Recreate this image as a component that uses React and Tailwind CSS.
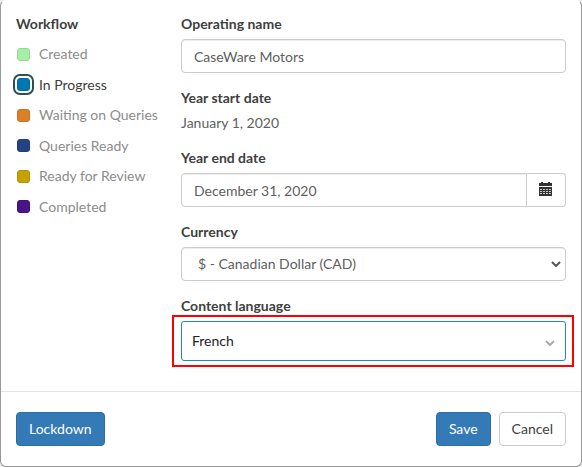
import React, { useState } from "react";

const STATES = [
  { name: "Created", swatch: "bg-[#a6f0a6] border-[#95d895]" },
  { name: "In Progress", swatch: "bg-[#0077b0] border-[#006b9e]" },
  { name: "Waiting on Queries", swatch: "bg-[#db8026] border-[#c57322]" },
  { name: "Queries Ready", swatch: "bg-[#244385] border-[#203c78]" },
  { name: "Ready for Review", swatch: "bg-[#c6a200] border-[#b29200]" },
  { name: "Completed", swatch: "bg-[#4a1486] border-[#431279]" },
];

const LABEL = "block text-[14px] leading-[20px] font-bold text-[#404040]";
const FIELD =
  "h-[34px] border border-[#ccc] bg-white px-3 text-[14px] leading-[20px] text-[#606060] outline-none shadow-[inset_0_1px_1px_rgba(0,0,0,0.075)]";
const BUTTON = "h-[34px] rounded border px-3 text-[14px] leading-[20px]";

function Workflow() {
  const [current, setCurrent] = useState("In Progress");
  return (
    <fieldset className="w-[149px] shrink-0">
      <legend className={LABEL}>Workflow</legend>
      <div className="mt-[10px] flex h-[173px] flex-col justify-between">
        {STATES.map((s) => (
          <label
            key={s.name}
            className={
              "flex items-center gap-[9px] pl-px text-[14px] leading-[20px] " +
              (s.name === current ? "text-[#404040]" : "text-[#8c8c8c]")
            }
          >
            <input
              type="radio"
              name="workflow"
              checked={s.name === current}
              onChange={() => setCurrent(s.name)}
              className={
                "size-[13px] shrink-0 appearance-none rounded-[3px] border outline-none checked:shadow-[0_0_0_2px_#fff,0_0_0_4px_#2f4f4f] " +
                s.swatch
              }
            />
            {s.name}
          </label>
        ))}
      </div>
    </fieldset>
  );
}

function CalendarIcon() {
  return (
    <svg viewBox="0 0 14 14" className="size-[14px]" shapeRendering="crispEdges" aria-hidden="true">
      <path fill="#333" d="M0 1h2V0h2v1h5V0h2v1h2v3H0zM0 5h13v9H0z" />
      <path
        stroke="#c8c8c8"
        strokeDasharray="2 1"
        d="M1 7.5h11M1 9.5h11M1 11.5h11"
      />
    </svg>
  );
}

function Chevron({ className }) {
  return (
    <svg viewBox="0 0 10 6" fill="none" stroke="currentColor" strokeWidth="2" className={className} aria-hidden="true">
      <path d="M1 1l4 4 4-4" />
    </svg>
  );
}

export default function App() {
  return (
    <div className="bg-[#ececec] font-[Lato,sans-serif]">
      <form
        className="rounded-md border border-[#999] border-t-[#fff] bg-white"
        onSubmit={(e) => e.preventDefault()}
      >
        <div className="flex px-[15px] pt-[13px] pb-[30px]">
          <Workflow />
          <div className="flex min-w-0 flex-1 flex-col gap-[15px] pl-4">
            <div>
              <label htmlFor="name" className={LABEL}>Operating name</label>
              <input id="name" defaultValue="CaseWare Motors" className={FIELD + " mt-[5px] block w-full rounded"} />
            </div>
            <div>
              <div className={LABEL}>Year start date</div>
              <div className="mt-[5px] text-[14px] leading-[20px] text-[#606060]">January 1, 2020</div>
            </div>
            <div>
              <label htmlFor="end" className={LABEL}>Year end date</label>
              <div className="mt-[5px] flex">
                <input id="end" defaultValue="December 31, 2020" className={FIELD + " min-w-0 flex-1 rounded-l"} />
                <button
                  type="button"
                  aria-label="Pick a date"
                  className="flex h-[34px] w-[39px] items-start justify-center rounded-r border border-l-0 border-[#ccc] bg-white pt-2"
                >
                  <CalendarIcon />
                </button>
              </div>
            </div>
            <div>
              <label htmlFor="currency" className={LABEL}>Currency</label>
              <div className="relative mt-[5px]">
                <select id="currency" className={FIELD + " block w-full appearance-none rounded pl-4"}>
                  <option>$ - Canadian Dollar (CAD)</option>
                </select>
                <Chevron className="pointer-events-none absolute top-[14px] right-[5px] h-[6px] w-[10px] text-[#555]" />
              </div>
            </div>
            <div>
              <label htmlFor="language" className={LABEL}>Content language</label>
              <div className="relative mt-[5px]">
                <select
                  id="language"
                  className="block h-[40px] w-full appearance-none rounded-[3px] border border-[#1c87c9] bg-white px-[10px] text-[14px] leading-[20px] text-[#222] outline-none"
                >
                  <option>French</option>
                </select>
                <Chevron className="pointer-events-none absolute top-[19px] right-[11px] h-[6px] w-[10px] text-[#aaa]" />
                <div className="pointer-events-none absolute -top-[6px] -right-[8px] -bottom-[6px] -left-[9px] border-2 border-[#f00]" />
              </div>
            </div>
          </div>
        </div>
        <div className="flex gap-2 border-t border-[#e5e5e5] px-[15px] pt-5 pb-5">
          <button type="button" className={BUTTON + " mr-auto border-[#2e6da4] bg-[#337ab7] text-white"}>Lockdown</button>
          <button type="submit" className={BUTTON + " border-[#2e6da4] bg-[#337ab7] text-white"}>Save</button>
          <button type="button" className={BUTTON + " border-[#ccc] bg-white text-[#404040]"}>Cancel</button>
        </div>
      </form>
    </div>
  );
}
